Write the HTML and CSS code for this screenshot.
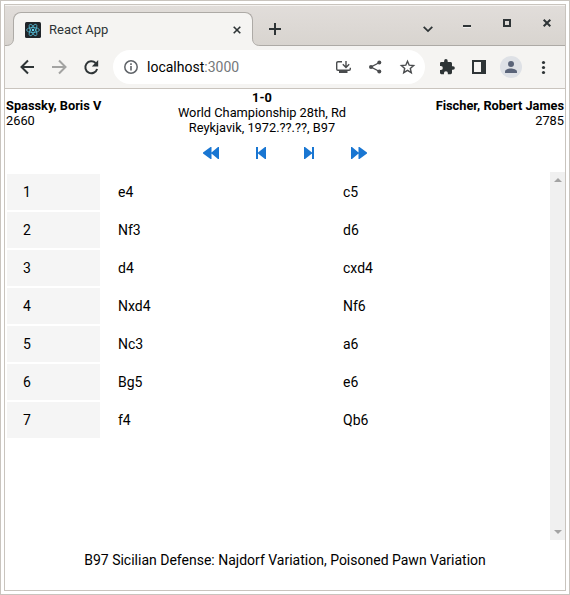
FILE: index.html
```html
<!DOCTYPE html>
<html lang="en">
<head>
<meta charset="utf-8">
<title>React App</title>
<link rel="stylesheet" href="styles.css">
</head>
<body>
<div class="window">
  <div class="tabstrip">
    <div class="tab-left"><svg width="9" height="8" viewBox="-1 0 9 8"><path d="M-1 8V7.500H0C5 7.500 7.500 5 7.500 0H8V8Z" fill="#f5f4f2"/><path d="M-1 7.500H0C5 7.500 7.500 5 7.500 0" fill="none" stroke="#adaaa6"/></svg></div>
    <div class="tab">
      <svg class="favicon" width="16" height="16" viewBox="0 0 16 16"><rect width="16" height="16" rx="1.500" fill="#20252a"/><g fill="none" stroke="#53b9d3" stroke-width=".8"><ellipse cx="8" cy="8" rx="6.400" ry="2.500"/><ellipse cx="8" cy="8" rx="6.400" ry="2.500" transform="rotate(60 8 8)"/><ellipse cx="8" cy="8" rx="6.400" ry="2.500" transform="rotate(120 8 8)"/></g><circle cx="8" cy="8" r="1.200" fill="#61dafb"/></svg>
      <span class="tab-title">React App</span>
      <svg class="tab-close" width="8" height="8" viewBox="0 0 8 8"><path d="M.7.7 7.3 7.3M7.3.7.7 7.3" stroke="#2e3436" stroke-width="1.6"/></svg>
    </div>
    <div class="tab-right"><svg width="8" height="8" viewBox="0 0 8 8"><path d="M8 8V7.5C3 7.5.5 5 .5 0H0V8Z" fill="#f5f4f2"/><path d="M8 7.5C3 7.5.5 5 .5 0" fill="none" stroke="#adaaa6"/></svg></div>
    <div class="strip-fill">
      <svg class="new-tab" width="12" height="12" viewBox="0 0 12 12"><path d="M6 0V12M0 6H12" stroke="#2e3436" stroke-width="2"/></svg>
      <svg class="chevron" width="10" height="7" viewBox="0 0 10 7"><path d="M.7.8 5 5.1 9.3.8" fill="none" stroke="#2e3436" stroke-width="1.8"/></svg>
      <svg class="win-buttons" width="90" height="10" viewBox="0 0 90 10"><path d="M0 8H8V9H0Z" fill="#fff" opacity=".6"/><path d="M0 7H8" stroke="#2e3436" stroke-width="2"/><path d="M41 1H47V7H41Z" fill="none" stroke="#2e3436" stroke-width="2"/><path d="M80.7.7 87.3 7.3M87.3.7 80.7 7.3" stroke="#2e3436" stroke-width="2"/></svg>
    </div>
  </div>
  <div class="toolbar">
    <svg class="nav-icons" width="80" height="16" viewBox="0 0 80 16"><path d="M14 8H2M8 1.5 1.5 8 8 14.5" fill="none" stroke="#2e3436" stroke-width="2"/><path d="M32 8H45M39 1.5 45.5 8 39 14.5" fill="none" stroke="#a3a3a2" stroke-width="2"/><path d="M75.6 4A6 6 0 1 0 77.1 10" fill="none" stroke="#2e3436" stroke-width="2"/><path d="M78.2 1V7.4H71.8Z" fill="#2e3436"/></svg>
    <div class="omnibox">
      <svg width="14" height="14" viewBox="0 0 14 14"><circle cx="7" cy="7" r="6.2" fill="none" stroke="#5f6368" stroke-width="1.5"/><path d="M7 6V10.5M7 3.3V4.9" stroke="#5f6368" stroke-width="1.6"/></svg>
      <span class="url">localhost<span class="port">:3000</span></span>
      <svg class="box-icons" width="80" height="16" viewBox="0 0 80 16"><g fill="none" stroke="#4a4c4e" stroke-width="1.4"><path d="M6 2.7H2Q.7 2.7.7 4V10Q.7 11.3 2 11.3H13Q14.3 11.3 14.3 10V8.7"/><path d="M10 2V8M6.8 5.2 10 8.4 13.2 5.2"/><path d="M43.500 3.500 35 8 43.500 12.500"/><path d="M71.5 2.2 73.2 6.2 77.6 6.6 74.3 9.4 75.3 13.7 71.5 11.4 67.7 13.7 68.7 9.4 65.4 6.6 69.8 6.2Z"/></g><path d="M3 11H11.5V14H3Z" fill="#4a4c4e"/><g fill="#4a4c4e"><circle cx="43.300" cy="3.500" r="2"/><circle cx="35" cy="8" r="2"/><circle cx="43.300" cy="12.500" r="2"/></g></svg>
    </div>
    <svg class="ext-icons" width="112" height="22" viewBox="0 0 112 22"><path transform="translate(-1.6 2.4) scale(.715)" d="M20.500 11H19V7c0-1.100-.9-2-2-2h-4V3.500a2.500 2.500 0 0 0-5 0V5H4c-1.100 0-2 .9-2 2v3.800h1.500a2.700 2.700 0 0 1 0 5.400H2V20c0 1.100.9 2 2 2h3.800v-1.500a2.700 2.700 0 0 1 5.400 0V22H17c1.100 0 2-.9 2-2v-4h1.500a2.500 2.500 0 0 0 0-5Z" fill="#2e3436"/><path d="M33 5H45V17H33Z" fill="none" stroke="#2e3436" stroke-width="2"/><path d="M41 5H45V17H41Z" fill="#2e3436"/><circle cx="71" cy="11" r="11" fill="#dee1e6"/><circle cx="71" cy="8" r="3" fill="#5a6479"/><path d="M65 17V15.500C65 13.400 69 12.400 71 12.400S77 13.400 77 15.500V17Z" fill="#5a6479"/><g fill="#2e3436"><circle cx="103.500" cy="6.500" r="1.600"/><circle cx="103.500" cy="11.500" r="1.600"/><circle cx="103.500" cy="16.500" r="1.600"/></g></svg>
  </div>
  <main>
    <header class="game">
      <div class="player"><b>Spassky, Boris V</b><span>2660</span></div>
      <div class="event"><b>1-0</b><span>World Championship 28th, Rd</span><span>Reykjavik, 1972.??.??, B97</span></div>
      <div class="player black"><b>Fischer, Robert James</b><span>2785</span></div>
    </header>
    <div class="controls">
      <svg width="16" height="12" viewBox="0 0 16 12"><path d="M8.500 0V12H7.500L0 6.500V5.500L7.500 0ZM16 0V12H15L8.500 6.500V5.500L15 0Z"/></svg>
      <svg width="10" height="12" viewBox="0 0 10 12"><path d="M0 0H2V12H0ZM10 0V12H9L2 6.500V5.500L9 0Z"/></svg>
      <svg class="forward" width="10" height="12" viewBox="0 0 10 12"><path d="M8 0H10V12H8ZM0 0V12H1L8 6.500V5.500L1 0Z"/></svg>
      <svg width="16" height="12" viewBox="0 0 16 12"><path d="M7.500 0V12H8.500L16 6.500V5.500L8.500 0ZM0 0V12H1L7.500 6.500V5.500L1 0Z"/></svg>
    </div>
    <div class="moves">
      <div class="grid">
        <span class="num">1</span><span>e4</span><span>c5</span>
        <span class="num">2</span><span>Nf3</span><span>d6</span>
        <span class="num">3</span><span>d4</span><span>cxd4</span>
        <span class="num">4</span><span>Nxd4</span><span>Nf6</span>
        <span class="num">5</span><span>Nc3</span><span>a6</span>
        <span class="num">6</span><span>Bg5</span><span>e6</span>
        <span class="num">7</span><span>f4</span><span>Qb6</span>
      </div>
      <div class="scrollbar">
        <svg width="8" height="4" viewBox="0 0 8 4"><path d="M4 0 8 4H0Z"/></svg>
        <svg width="8" height="4" viewBox="0 0 8 4"><path d="M0 0H8L4 4Z"/></svg>
      </div>
    </div>
    <footer>B97 Sicilian Defense: Najdorf Variation, Poisoned Pawn Variation</footer>
  </main>
</div>
</body>
</html>
```
FILE: styles.css
```css
* { box-sizing: border-box; }
body {
  margin: 0;
  height: 595px;
  padding: 3px;
  border: 1px solid #c9c4be;
  background: #fff;
  font-family: Roboto, sans-serif;
  font-size: 14px;
  color: #000;
  overflow: hidden;
}
svg { display: block; flex: none; }
.window {
  height: 587px;
  border: 1px solid #c9c4be;
  display: flex;
  flex-direction: column;
}
.tabstrip {
  height: 41px;
  display: flex;
  align-items: flex-end;
  background: linear-gradient(#f5f3f1 0, #f5f3f1 1px, #e1ddda 1px, #d8d4cf);
}
.tab-left { width: 9px; }
.tab {
  width: 240px;
  height: 34px;
  padding: 0 11px;
  display: flex;
  align-items: center;
  background: #f5f4f2;
  border: 1px solid #adaaa6;
  border-bottom: 0;
  border-radius: 8px 8px 0 0;
}
.tab-left + .tab { margin: 0 -1px; }
.tab-left, .tab-right { position: relative; z-index: 1; }
.tab-title { margin-left: 8px; color: #2e3436; flex: 1; font-size: 13px; }
.strip-fill {
  flex: 1;
  height: 41px;
  display: flex;
  border-bottom: 1px solid #adaaa6;
}
.new-tab { margin: 18px 0 0 9px; }
.chevron { margin: 21px 0 0 auto; }
.win-buttons { margin: 14px 12px 0 30px; }
.toolbar {
  height: 43px;
  padding: 0 9px 0 15px;
  display: flex;
  align-items: center;
  background: #f5f4f2;
  border-bottom: 1px solid #c9c4be;
}
.omnibox {
  width: 312px;
  height: 34px;
  margin-left: 13px;
  padding: 0 9px 0 11px;
  border-radius: 17px;
  background: #fff;
  display: flex;
  align-items: center;
}
.url { margin-left: 9px; flex: 1; font-size: 14px; }
.port { color: #75787b; }
.ext-icons { margin-left: 15px; }
main { flex: 1; display: flex; flex-direction: column; }
.game {
  height: 47px;
  padding: 1px 1px;
  display: flex;
  justify-content: space-between;
  align-items: center;
  font-size: 12.8px;
  line-height: 15px;
}
.player, .event { display: flex; flex-direction: column; }
.event { text-align: center; margin-right: 13px; }
.black { text-align: right; }
.controls {
  height: 36px;
  padding-bottom: 2px;
  display: flex;
  justify-content: center;
  align-items: center;
  gap: 37px;
  fill: #1976d2;
}
.forward { margin-left: 1px; }
.moves { height: 368px; display: flex; }
.grid {
  flex: 1;
  padding: 2px;
  display: grid;
  grid-template-columns: 93px 223px 1fr;
  grid-auto-rows: 36px;
  gap: 2px;
  align-content: start;
}
.grid span { padding-left: 16px; line-height: 37px; }
.grid .num { background: #f5f5f5; }
.scrollbar {
  width: 15px;
  padding: 6px 0;
  display: flex;
  flex-direction: column;
  justify-content: space-between;
  align-items: center;
  background: #f0f0f0;
  fill: #a3a3a3;
}
footer { text-align: center; line-height: 20px; padding-top: 10px; }
```
